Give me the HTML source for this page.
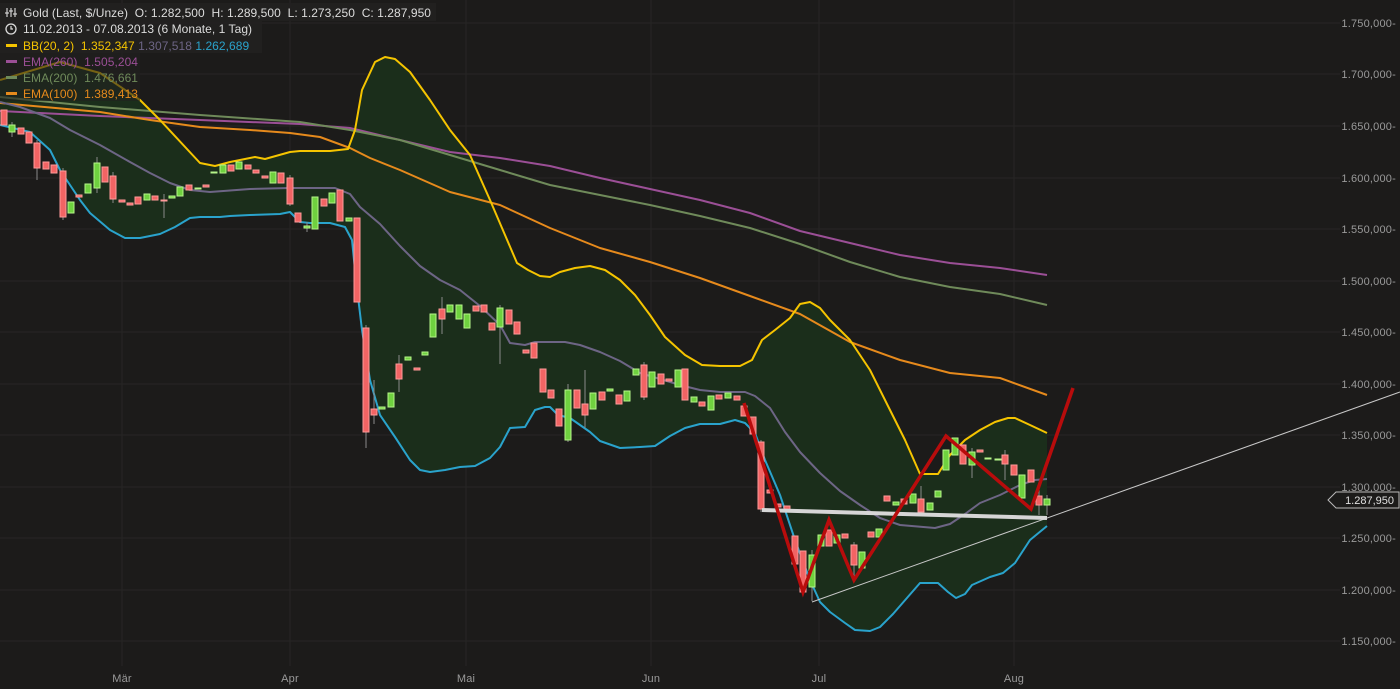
<!DOCTYPE html>
<html><head><meta charset="utf-8"><style>
html,body{margin:0;padding:0;background:#1c1b1a;}
svg{display:block;font-family:"Liberation Sans",sans-serif;}
.r{fill:#f26464;stroke:#ff9a9a;stroke-width:1}
.g{fill:#6fd13f;stroke:#b6f58a;stroke-width:1}
.w{stroke:#8a8a8a;stroke-width:1}
.ax{fill:#9a9a9a;font-size:11px;letter-spacing:0.2px}
.lg{font-size:12px;letter-spacing:0.05px;white-space:pre}
.lg text{white-space:pre}
</style></head><body>
<svg width="1400" height="689" viewBox="0 0 1400 689" xmlns="http://www.w3.org/2000/svg">
<rect width="1400" height="689" fill="#1c1b1a"/>
<g stroke="#272625" stroke-width="1">
<line x1="0" y1="23" x2="1340" y2="23"/><line x1="0" y1="74" x2="1340" y2="74"/><line x1="0" y1="126" x2="1340" y2="126"/><line x1="0" y1="178" x2="1340" y2="178"/><line x1="0" y1="229" x2="1340" y2="229"/><line x1="0" y1="281" x2="1340" y2="281"/><line x1="0" y1="332" x2="1340" y2="332"/><line x1="0" y1="384" x2="1340" y2="384"/><line x1="0" y1="435" x2="1340" y2="435"/><line x1="0" y1="487" x2="1340" y2="487"/><line x1="0" y1="538" x2="1340" y2="538"/><line x1="0" y1="590" x2="1340" y2="590"/><line x1="0" y1="641" x2="1340" y2="641"/>
<line x1="122" y1="0" x2="122" y2="666"/><line x1="290" y1="0" x2="290" y2="666"/><line x1="466" y1="0" x2="466" y2="666"/><line x1="651" y1="0" x2="651" y2="666"/><line x1="819" y1="0" x2="819" y2="666"/><line x1="1014" y1="0" x2="1014" y2="666"/>
</g>
<polygon fill="#1b2e1b" points="0,80 40,68 60,62 100,73 140,100 160,120 200,163 215,166 230,162 255,157 265,159 290,152 300,151 330,151 348,149 355,130 362,90 375,62 385,57 395,59 410,72 430,100 450,130 470,155 490,200 505,235 517,263 528,270 540,276 550,277 560,272 575,268 590,266 605,270 620,280 635,295 650,315 665,337 685,355 702,365 720,366 740,366 752,360 762,340 775,330 790,318 800,304 810,302 820,308 830,320 850,340 870,370 890,410 905,440 920,474 938,474 950,455 965,440 980,430 995,422 1008,418 1015,418 1030,425 1047,433 1047,526 1030,540 1015,563 1003,573 990,577 972,585 965,594 956,598 948,592 938,583 920,583 893,614 880,627 870,631 855,630 845,623 830,612 820,602 810,580 795,540 780,495 765,460 755,433 745,423 735,420 720,424 700,424 685,428 670,436 655,446 640,447 620,448 600,441 590,432 570,418 558,415 550,407 545,407 535,410 525,427 510,428 500,447 490,458 475,466 460,467 445,470 430,472 420,470 410,460 395,437 380,415 370,380 362,330 356,280 352,240 345,227 330,223 310,223 300,222 290,212 280,214 250,215 230,216 220,217 200,217 190,218 175,227 160,234 140,238 125,238 110,230 90,213 80,200 60,170 50,150 30,132 0,125"/>
<g fill="none" stroke-width="2" stroke-linejoin="round">
<polyline stroke="#9b4f96" points="0,111 100,116 200,120 300,124 350,128 400,140 450,152 500,158 550,166 600,178 650,189 700,200 750,213 800,231 850,243 900,255 950,263 1000,268 1047,275"/>
<polyline stroke="#6f8a5a" points="0,97 100,107 200,115 300,122 350,130 400,140 450,155 500,170 550,185 600,195 650,205 700,216 750,228 800,244 850,262 900,277 950,287 1000,294 1047,305"/>
<polyline stroke="#e68a1c" points="0,103 100,112 150,120 200,127 250,130 290,133 320,137 350,148 370,158 400,170 450,192 500,205 550,228 600,248 650,262 700,278 750,296 800,314 850,342 900,360 950,373 1000,378 1047,395"/>
<polyline stroke="#f5c400" points="0,80 40,68 60,62 100,73 140,100 160,120 200,163 215,166 230,162 255,157 265,159 290,152 300,151 330,151 348,149 355,130 362,90 375,62 385,57 395,59 410,72 430,100 450,130 470,155 490,200 505,235 517,263 528,270 540,276 550,277 560,272 575,268 590,266 605,270 620,280 635,295 650,315 665,337 685,355 702,365 720,366 740,366 752,360 762,340 775,330 790,318 800,304 810,302 820,308 830,320 850,340 870,370 890,410 905,440 920,474 938,474 950,455 965,440 980,430 995,422 1008,418 1015,418 1030,425 1047,433"/>
<polyline stroke="#2aa3cc" points="0,125 30,132 50,150 60,170 80,200 90,213 110,230 125,238 140,238 160,234 175,227 190,218 200,217 220,217 230,216 250,215 280,214 290,212 300,222 310,223 330,223 345,227 352,240 356,280 362,330 370,380 380,415 395,437 410,460 420,470 430,472 445,470 460,467 475,466 490,458 500,447 510,428 525,427 535,410 545,407 550,407 558,415 570,418 590,432 600,441 620,448 640,447 655,446 670,436 685,428 700,424 720,424 735,420 745,423 755,433 765,460 780,495 795,540 810,580 820,602 830,612 845,623 855,630 870,631 880,627 893,614 920,583 938,583 948,592 956,598 965,594 972,585 990,577 1003,573 1015,563 1030,540 1047,526"/>
<polyline stroke="#6d6585" points="0,102 20,107 50,118 70,130 100,145 130,162 150,173 170,183 190,190 210,192 250,189 290,188 335,188 350,194 360,207 380,224 400,246 420,266 440,280 460,290 480,306 500,325 510,343 525,345 535,342 565,342 580,345 600,352 620,361 640,373 660,379 680,385 700,390 720,392 745,392 755,396 770,408 785,432 800,452 820,473 840,491 860,505 880,518 900,525 935,528 950,524 965,514 980,503 1000,495 1020,485 1035,480 1047,479"/>
</g>
<g class="w">
<line x1="12" y1="122" x2="12" y2="137"/><line x1="37" y1="140" x2="37" y2="180"/><line x1="63" y1="168" x2="63" y2="220"/><line x1="97" y1="157" x2="97" y2="193"/><line x1="113" y1="172" x2="113" y2="203"/><line x1="164" y1="194" x2="164" y2="218"/><line x1="290" y1="175" x2="290" y2="206"/><line x1="307" y1="222" x2="307" y2="232"/><line x1="366" y1="325" x2="366" y2="448"/><line x1="374" y1="380" x2="374" y2="424"/><line x1="399" y1="355" x2="399" y2="392"/><line x1="442" y1="297" x2="442" y2="334"/><line x1="500" y1="305" x2="500" y2="364"/><line x1="568" y1="384" x2="568" y2="442"/><line x1="585" y1="370" x2="585" y2="428"/><line x1="644" y1="362" x2="644" y2="400"/><line x1="761" y1="440" x2="761" y2="512"/><line x1="812" y1="550" x2="812" y2="601"/><line x1="854" y1="542" x2="854" y2="578"/><line x1="921" y1="486" x2="921" y2="516"/><line x1="972" y1="448" x2="972" y2="478"/><line x1="1005" y1="450" x2="1005" y2="480"/><line x1="1039" y1="490" x2="1039" y2="515"/><line x1="1047" y1="495" x2="1047" y2="515"/>
</g>
<g class="r">
<rect x="1" y="110" width="6" height="15"/><rect x="18" y="128" width="6" height="6"/><rect x="26" y="132" width="6" height="11"/><rect x="34" y="143" width="6" height="25"/><rect x="43" y="162" width="6" height="7"/><rect x="51" y="165" width="6" height="8"/><rect x="60" y="171" width="6" height="46"/><rect x="76" y="195" width="6" height="2"/><rect x="102" y="167" width="6" height="15"/><rect x="110" y="176" width="6" height="23"/><rect x="119" y="200" width="6" height="2"/><rect x="127" y="203" width="6" height="2"/><rect x="135" y="197" width="6" height="7"/><rect x="152" y="196" width="6" height="4"/><rect x="161" y="200" width="6" height="1"/><rect x="186" y="185" width="6" height="5"/><rect x="203" y="185" width="6" height="2"/><rect x="228" y="165" width="6" height="6"/><rect x="245" y="165" width="6" height="4"/><rect x="253" y="170" width="6" height="3"/><rect x="262" y="176" width="6" height="2"/><rect x="278" y="173" width="6" height="10"/><rect x="287" y="178" width="6" height="26"/><rect x="295" y="213" width="6" height="9"/><rect x="321" y="199" width="6" height="7"/><rect x="337" y="190" width="6" height="31"/><rect x="354" y="218" width="6" height="84"/><rect x="363" y="328" width="6" height="104"/><rect x="371" y="409" width="6" height="6"/><rect x="396" y="364" width="6" height="15"/><rect x="414" y="368" width="6" height="2"/><rect x="439" y="309" width="6" height="10"/><rect x="473" y="306" width="6" height="5"/><rect x="481" y="305" width="6" height="7"/><rect x="489" y="323" width="6" height="7"/><rect x="506" y="310" width="6" height="14"/><rect x="514" y="322" width="6" height="12"/><rect x="523" y="350" width="6" height="3"/><rect x="531" y="343" width="6" height="15"/><rect x="540" y="369" width="6" height="23"/><rect x="548" y="390" width="6" height="8"/><rect x="556" y="409" width="6" height="17"/><rect x="574" y="390" width="6" height="18"/><rect x="582" y="404" width="6" height="11"/><rect x="599" y="392" width="6" height="8"/><rect x="616" y="395" width="6" height="9"/><rect x="641" y="365" width="6" height="32"/><rect x="658" y="374" width="6" height="10"/><rect x="666" y="379" width="6" height="2"/><rect x="682" y="369" width="6" height="31"/><rect x="699" y="402" width="6" height="4"/><rect x="716" y="395" width="6" height="4"/><rect x="734" y="396" width="6" height="4"/><rect x="741" y="406" width="6" height="10"/><rect x="750" y="417" width="6" height="17"/><rect x="758" y="442" width="6" height="67"/><rect x="767" y="490" width="6" height="3"/><rect x="775" y="504" width="6" height="3"/><rect x="784" y="506" width="6" height="4"/><rect x="792" y="536" width="6" height="28"/><rect x="800" y="551" width="6" height="41"/><rect x="826" y="530" width="6" height="16"/><rect x="842" y="534" width="6" height="4"/><rect x="851" y="545" width="6" height="20"/><rect x="868" y="532" width="6" height="5"/><rect x="884" y="496" width="6" height="5"/><rect x="901" y="499" width="6" height="5"/><rect x="918" y="499" width="6" height="13"/><rect x="960" y="445" width="6" height="19"/><rect x="977" y="450" width="6" height="2"/><rect x="1002" y="455" width="6" height="9"/><rect x="1011" y="465" width="6" height="10"/><rect x="1028" y="470" width="6" height="12"/><rect x="1036" y="496" width="6" height="9"/>
</g>
<g class="g">
<rect x="9" y="125" width="6" height="7"/><rect x="68" y="202" width="6" height="11"/><rect x="85" y="184" width="6" height="9"/><rect x="94" y="163" width="6" height="25"/><rect x="144" y="194" width="6" height="6"/><rect x="169" y="196" width="6" height="2"/><rect x="177" y="187" width="6" height="9"/><rect x="195" y="188" width="6" height="1"/><rect x="211" y="172" width="6" height="1"/><rect x="220" y="165" width="6" height="8"/><rect x="236" y="162" width="6" height="7"/><rect x="270" y="172" width="6" height="11"/><rect x="304" y="226" width="6" height="2"/><rect x="312" y="197" width="6" height="32"/><rect x="329" y="193" width="6" height="10"/><rect x="346" y="218" width="6" height="3"/><rect x="379" y="407" width="6" height="2"/><rect x="388" y="393" width="6" height="14"/><rect x="405" y="357" width="6" height="3"/><rect x="422" y="352" width="6" height="3"/><rect x="430" y="314" width="6" height="23"/><rect x="447" y="305" width="6" height="7"/><rect x="456" y="305" width="6" height="14"/><rect x="464" y="314" width="6" height="14"/><rect x="497" y="308" width="6" height="19"/><rect x="565" y="390" width="6" height="50"/><rect x="590" y="393" width="6" height="16"/><rect x="607" y="389" width="6" height="2"/><rect x="624" y="391" width="6" height="10"/><rect x="633" y="369" width="6" height="6"/><rect x="649" y="372" width="6" height="15"/><rect x="675" y="370" width="6" height="17"/><rect x="691" y="397" width="6" height="5"/><rect x="708" y="396" width="6" height="14"/><rect x="725" y="393" width="6" height="5"/><rect x="809" y="555" width="6" height="32"/><rect x="818" y="535" width="6" height="11"/><rect x="834" y="535" width="6" height="8"/><rect x="859" y="552" width="6" height="16"/><rect x="876" y="529" width="6" height="8"/><rect x="893" y="502" width="6" height="3"/><rect x="910" y="494" width="6" height="9"/><rect x="927" y="503" width="6" height="7"/><rect x="935" y="491" width="6" height="6"/><rect x="943" y="450" width="6" height="20"/><rect x="952" y="438" width="6" height="17"/><rect x="969" y="452" width="6" height="13"/><rect x="985" y="458" width="6" height="1"/><rect x="995" y="459" width="6" height="1"/><rect x="1019" y="475" width="6" height="23"/><rect x="1044" y="499" width="6" height="6"/>
</g>
<line x1="812" y1="602" x2="1400" y2="392" stroke="#c8c8c8" stroke-width="1"/>
<line x1="762" y1="510" x2="1047" y2="518" stroke="#d6d6d6" stroke-width="4"/>
<polyline fill="none" stroke="#b80c0c" stroke-width="3.5" stroke-linejoin="miter" points="744,403 803,592 829,520 854,580 946,436 1031,509 1073,388"/>
<g class="ax" text-anchor="end">
<text x="1396" y="27">1.750,000-</text><text x="1396" y="78">1.700,000-</text><text x="1396" y="130">1.650,000-</text><text x="1396" y="182">1.600,000-</text><text x="1396" y="233">1.550,000-</text><text x="1396" y="285">1.500,000-</text><text x="1396" y="336">1.450,000-</text><text x="1396" y="388">1.400,000-</text><text x="1396" y="439">1.350,000-</text><text x="1396" y="491">1.300,000-</text><text x="1396" y="542">1.250,000-</text><text x="1396" y="594">1.200,000-</text><text x="1396" y="645">1.150,000-</text>
</g>
<path d="M1328,500 L1336,492 L1399,492 L1399,508 L1336,508 Z" fill="#1c1b1a" stroke="#bbbbbb" stroke-width="1"/>
<text x="1394" y="504" text-anchor="end" fill="#e0e0e0" font-size="11">1.287,950</text>
<g class="ax" text-anchor="middle" fill="#8a8a8a">
<text x="122" y="682">Mär</text><text x="290" y="682">Apr</text><text x="466" y="682">Mai</text><text x="651" y="682">Jun</text><text x="819" y="682">Jul</text><text x="1014" y="682">Aug</text>
</g>
<rect x="0" y="3" width="436" height="18" fill="#222120" opacity="0.9"/>
<rect x="0" y="21" width="262" height="32" fill="#222120" opacity="0.9"/>
<rect x="0" y="53" width="140" height="48" fill="#222120" opacity="0.6"/>
<g class="lg">
<g stroke="#cfcfcf" stroke-width="1.2"><line x1="7" y1="8" x2="7" y2="17"/><line x1="11" y1="8" x2="11" y2="17"/><line x1="15" y1="8" x2="15" y2="17"/><line x1="5" y1="13" x2="9" y2="13"/><line x1="9" y1="11" x2="13" y2="11"/><line x1="13" y1="14" x2="17" y2="14"/></g>
<text x="23" y="17" fill="#dcdcdc" xml:space="preserve">Gold (Last, $/Unze)  O: 1.282,500  H: 1.289,500  L: 1.273,250  C: 1.287,950</text>
<circle cx="11" cy="29" r="5" fill="none" stroke="#dcdcdc" stroke-width="1.3"/><path d="M11,26 V29 H13" fill="none" stroke="#dcdcdc" stroke-width="1.2"/>
<text x="23" y="33" fill="#dcdcdc">11.02.2013 - 07.08.2013 (6 Monate, 1 Tag)</text>
<rect x="6" y="44" width="11" height="3" fill="#f5c400"/>
<text x="23" y="50" xml:space="preserve"><tspan fill="#f5c400">BB(20, 2)  1.352,347</tspan><tspan fill="#6d6585"> 1.307,518</tspan><tspan fill="#2aa3cc"> 1.262,689</tspan></text>
<rect x="6" y="60" width="11" height="3" fill="#9b4f96"/>
<text x="23" y="66" fill="#9b4f96" xml:space="preserve">EMA(260)  1.505,204</text>
<rect x="6" y="76" width="11" height="3" fill="#6f8a5a"/>
<text x="23" y="82" fill="#6f8a5a" xml:space="preserve">EMA(200)  1.476,661</text>
<rect x="6" y="92" width="11" height="3" fill="#e68a1c"/>
<text x="23" y="98" fill="#e68a1c" xml:space="preserve">EMA(100)  1.389,413</text>
</g>
</svg>
</body></html>
